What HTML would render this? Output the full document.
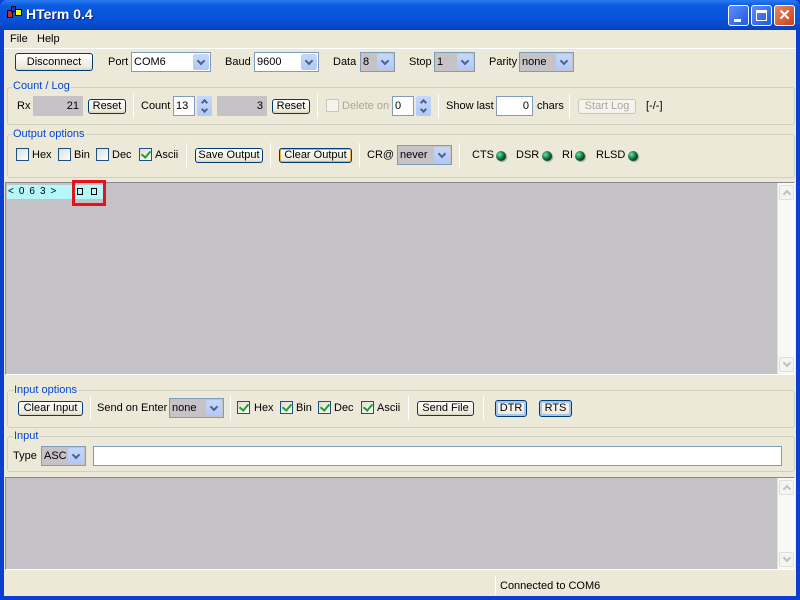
<!DOCTYPE html>
<html><head><style>
*{box-sizing:border-box;margin:0;padding:0}
body{width:800px;height:600px;overflow:hidden;background:#0a3fd0;font-family:"Liberation Sans",sans-serif;font-size:11px;color:#000;position:relative;white-space:nowrap}
.a{position:absolute}
#tb{left:0;top:0;width:800px;height:30px;background:linear-gradient(#2a7bf0,#0a5ae0 20%,#0650d8 70%,#0842b8);border-radius:7px 7px 0 0}
#cl{left:4px;top:30px;width:792px;height:566px;background:#ece9d8}
.btn{position:absolute;border:1px solid #003c74;border-radius:3px;background:linear-gradient(#fff,#ece9d8 85%,#d6d0c0);text-align:center;line-height:13px;font-size:11px}
.sel{position:absolute;background:#fff;border:1px solid #7f9db9;height:20px;line-height:18px;padding-left:2px}
.sel.g{background:#c6c3c6}
.dd,.sp{position:absolute;right:1px;top:1px;width:16px;height:16px;background:linear-gradient(#c5d8fb,#b2c9f5);border-radius:2px}
.dd::after{content:"";position:absolute;left:5px;top:4px;width:4px;height:4px;border:solid #4d6185;border-width:0 2px 2px 0;transform:rotate(45deg)}
.inp{position:absolute;background:#fff;border:1px solid #7f9db9;height:20px;line-height:18px;text-align:right;padding-right:3px}
.inp.g{background:#c6c3c6;border-color:#c6c3c6}
.grp{position:absolute;border:1px solid #d0d0bf;border-radius:3px}
.gt{position:absolute;color:#0046d5;background:#ece9d8;padding:0 1px;font-size:11px}
.cb{position:absolute;width:13px;height:13px;border:1px solid #1c5180;background:linear-gradient(135deg,#dcdcd7,#fff)}
.cb.c::after{content:"";position:absolute;left:3px;top:0px;width:4px;height:7px;border:solid #21a121;border-width:0 2px 2px 0;transform:rotate(40deg)}
.sep{position:absolute;width:1px;background:#c5c2b2;border-right:1px solid #fff}
.led{position:absolute;width:10px;height:10px;border-radius:50%;background:radial-gradient(circle at 35% 35%,#6fe0a0,#0f6a3a 50%,#000);box-shadow:1px 1px 1px #999}
.sb{position:absolute;width:17px;background:#f8f8f4;border-left:1px solid #e0e0dc}
.sbb{position:absolute;left:1px;width:15px;height:15px;border:1px solid #e0ded6;border-radius:2px;background:#f4f4f0}
.up::after,.dn::after{content:"";position:absolute;left:4px;width:4px;height:4px;border:solid #c0c0c0;border-width:0 2px 2px 0}
.up::after{top:5px;transform:rotate(-135deg)}
.dn::after{top:2px;transform:rotate(45deg)}
.spn{position:absolute;width:15px;height:20px;background:linear-gradient(#c5d8fb,#b2c9f5);border-radius:2px}
.spn::before,.spn::after{content:"";position:absolute;left:5px;width:3px;height:3px;border:solid #4d6185;border-width:0 2px 2px 0}
.spn::before{top:4px;transform:rotate(-135deg)}
.spn::after{top:11px;transform:rotate(45deg)}
</style></head><body>
<div id="tb" class="a">
 <div class="a" style="left:7px;top:10px;width:6px;height:8px;background:#d22;border:1px solid #000"></div>
 <div class="a" style="left:11px;top:6px;width:5px;height:6px;background:#23c;border:1px solid #000"></div>
 <div class="a" style="left:15px;top:9px;width:7px;height:7px;background:#ff0;border:1px solid #000"></div>
 <div class="a" style="left:26px;top:6px;color:#fff;font-weight:bold;font-size:14px;text-shadow:1px 1px #0a1e80">HTerm 0.4</div>
 <div class="a" style="left:728px;top:5px;width:21px;height:21px;border:1px solid #fff;border-radius:3px;background:linear-gradient(135deg,#5c8ff8,#2258e0)"><div class="a" style="left:5px;top:13px;width:7px;height:3px;background:#fff"></div></div>
 <div class="a" style="left:751px;top:5px;width:21px;height:21px;border:1px solid #fff;border-radius:3px;background:linear-gradient(135deg,#5c8ff8,#2258e0)"><div class="a" style="left:4px;top:4px;width:11px;height:11px;border:1px solid #fff;border-top-width:3px"></div></div>
 <div class="a" style="left:774px;top:5px;width:21px;height:21px;border:1px solid #fff;border-radius:3px;background:linear-gradient(135deg,#e58a6a,#c6401a);color:#fff;font-weight:bold;font-size:15px;text-align:center;line-height:19px">✕</div>
</div>
<div id="cl" class="a"></div>
<div class="a" style="left:10px;top:33px">File</div>
<div class="a" style="left:37px;top:33px">Help</div>
<div class="a" style="left:4px;top:48px;width:792px;border-top:1px solid #fff"></div>

<div class="btn" style="left:15px;top:53px;width:78px;height:18px;line-height:16px">Disconnect</div>
<div class="a" style="left:108px;top:56px">Port</div>
<div class="sel" style="left:131px;top:52px;width:80px">COM6<div class="dd"></div></div>
<div class="a" style="left:225px;top:56px">Baud</div>
<div class="sel" style="left:254px;top:52px;width:65px">9600<div class="dd"></div></div>
<div class="a" style="left:333px;top:56px">Data</div>
<div class="sel g" style="left:360px;top:52px;width:35px">8<div class="dd"></div></div>
<div class="a" style="left:409px;top:56px">Stop</div>
<div class="sel g" style="left:434px;top:52px;width:41px">1<div class="dd"></div></div>
<div class="a" style="left:489px;top:56px">Parity</div>
<div class="sel g" style="left:519px;top:52px;width:55px">none<div class="dd"></div></div>

<div class="grp" style="left:7px;top:87px;width:788px;height:38px"></div>
<div class="gt" style="left:12px;top:80px">Count / Log</div>
<div class="a" style="left:17px;top:100px">Rx</div>
<div class="inp g" style="left:33px;top:96px;width:50px">21</div>
<div class="btn" style="left:88px;top:99px;width:38px;height:15px">Reset</div>
<div class="sep" style="left:133px;top:94px;height:24px"></div>
<div class="a" style="left:141px;top:100px">Count</div>
<div class="inp" style="left:173px;top:96px;width:22px;text-align:left;padding-left:2px">13</div>
<div class="spn" style="left:197px;top:96px"></div>
<div class="inp g" style="left:217px;top:96px;width:50px">3</div>
<div class="btn" style="left:272px;top:99px;width:38px;height:15px">Reset</div>
<div class="sep" style="left:317px;top:94px;height:24px"></div>
<div class="cb" style="left:326px;top:99px;border-color:#c9c7ba;background:#f4f3ee"></div>
<div class="a" style="left:342px;top:100px;color:#aca899">Delete on</div>
<div class="inp" style="left:392px;top:96px;width:22px;text-align:left;padding-left:2px">0</div>
<div class="spn" style="left:416px;top:96px"></div>
<div class="sep" style="left:438px;top:94px;height:24px"></div>
<div class="a" style="left:446px;top:100px">Show last</div>
<div class="inp" style="left:496px;top:96px;width:37px">0</div>
<div class="a" style="left:537px;top:100px">chars</div>
<div class="sep" style="left:569px;top:94px;height:24px"></div>
<div class="btn" style="left:578px;top:99px;width:58px;height:15px;border-color:#c9c7ba;color:#aca899;background:#f4f3ee">Start Log</div>
<div class="a" style="left:646px;top:100px">[-/-]</div>

<div class="grp" style="left:7px;top:134px;width:788px;height:44px"></div>
<div class="gt" style="left:12px;top:128px">Output options</div>
<div class="cb" style="left:16px;top:148px"></div><div class="a" style="left:32px;top:149px">Hex</div>
<div class="cb" style="left:58px;top:148px"></div><div class="a" style="left:74px;top:149px">Bin</div>
<div class="cb" style="left:96px;top:148px"></div><div class="a" style="left:112px;top:149px">Dec</div>
<div class="cb c" style="left:139px;top:148px"></div><div class="a" style="left:155px;top:149px">Ascii</div>
<div class="sep" style="left:186px;top:143px;height:24px"></div>
<div class="btn" style="left:195px;top:148px;width:68px;height:15px">Save Output</div>
<div class="sep" style="left:270px;top:143px;height:24px"></div>
<div class="btn" style="left:279px;top:148px;width:73px;height:15px;box-shadow:inset 0 0 0 1px #f0b040">Clear Output</div>
<div class="sep" style="left:359px;top:143px;height:24px"></div>
<div class="a" style="left:367px;top:149px">CR@</div>
<div class="sel g" style="left:397px;top:145px;width:55px">never<div class="dd"></div></div>
<div class="sep" style="left:459px;top:143px;height:24px"></div>
<div class="a" style="left:472px;top:149px">CTS</div><div class="led" style="left:496px;top:151px"></div>
<div class="a" style="left:516px;top:149px">DSR</div><div class="led" style="left:542px;top:151px"></div>
<div class="a" style="left:562px;top:149px">RI</div><div class="led" style="left:575px;top:151px"></div>
<div class="a" style="left:596px;top:149px">RLSD</div><div class="led" style="left:628px;top:151px"></div>

<div class="a" style="left:5px;top:182px;width:790px;height:193px;background:#c5c2c7;border:1px solid #8a8a8a;border-right-color:#fff;border-bottom-color:#fff"></div>
<div class="a" style="left:7px;top:185px;width:68px;height:14px;background:#b4f8fc;font-size:10px;letter-spacing:5px;line-height:14px;padding-left:1px">&lt;063&gt;</div>
<div class="a" style="left:75px;top:185px;width:28px;height:14px;background:#b4f8fc"></div>
<div class="a" style="left:77px;top:188px;width:6px;height:7px;border:1px solid #000"></div>
<div class="a" style="left:91px;top:188px;width:6px;height:7px;border:1px solid #000"></div>
<div class="a" style="left:72px;top:180px;width:34px;height:26px;border:3px solid #e0141a"></div>
<div class="sb" style="left:777px;top:183px;height:191px"><div class="sbb up" style="top:2px"></div><div class="sbb dn" style="bottom:2px"></div></div>

<div class="grp" style="left:7px;top:390px;width:788px;height:38px"></div>
<div class="gt" style="left:13px;top:384px">Input options</div>
<div class="btn" style="left:18px;top:401px;width:65px;height:15px">Clear Input</div>
<div class="sep" style="left:90px;top:396px;height:24px"></div>
<div class="a" style="left:97px;top:402px">Send on Enter</div>
<div class="sel g" style="left:169px;top:398px;width:55px">none<div class="dd"></div></div>
<div class="sep" style="left:230px;top:396px;height:24px"></div>
<div class="cb c" style="left:237px;top:401px"></div><div class="a" style="left:254px;top:402px">Hex</div>
<div class="cb c" style="left:280px;top:401px"></div><div class="a" style="left:296px;top:402px">Bin</div>
<div class="cb c" style="left:318px;top:401px"></div><div class="a" style="left:334px;top:402px">Dec</div>
<div class="cb c" style="left:361px;top:401px"></div><div class="a" style="left:377px;top:402px">Ascii</div>
<div class="sep" style="left:408px;top:396px;height:24px"></div>
<div class="btn" style="left:417px;top:401px;width:57px;height:15px">Send File</div>
<div class="sep" style="left:483px;top:396px;height:24px"></div>
<div class="btn" style="left:495px;top:400px;width:32px;height:17px;line-height:15px;box-shadow:inset 0 0 0 2px #a8c4f0">DTR</div>
<div class="btn" style="left:539px;top:400px;width:33px;height:17px;line-height:15px;box-shadow:inset 0 0 0 2px #a8c4f0">RTS</div>

<div class="grp" style="left:7px;top:436px;width:788px;height:36px"></div>
<div class="gt" style="left:13px;top:430px">Input</div>
<div class="a" style="left:13px;top:450px">Type</div>
<div class="sel g" style="left:41px;top:446px;width:45px">ASC<div class="dd"></div></div>
<div class="inp" style="left:93px;top:446px;width:689px"></div>

<div class="a" style="left:5px;top:477px;width:790px;height:93px;background:#c5c2c7;border:1px solid #8a8a8a;border-right-color:#fff;border-bottom-color:#fff"></div>
<div class="sb" style="left:777px;top:478px;height:91px"><div class="sbb up" style="top:2px"></div><div class="sbb dn" style="bottom:2px"></div></div>

<div class="a" style="left:495px;top:576px;width:1px;height:19px;background:#aca899;border-right:1px solid #fff"></div>
<div class="a" style="left:500px;top:580px">Connected to COM6</div>
</body></html>
